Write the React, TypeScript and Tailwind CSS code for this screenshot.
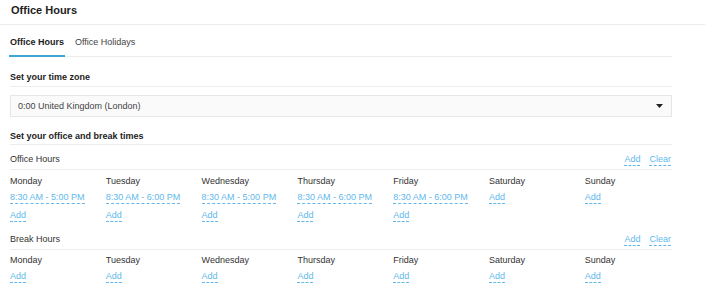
import React from 'react'

const days = ['Monday', 'Tuesday', 'Wednesday', 'Thursday', 'Friday', 'Saturday', 'Sunday']

// office hours per day: null = not set
const officeHours: (string | null)[] = [
  '8:30 AM - 5:00 PM',
  '8:30 AM - 6:00 PM',
  '8:30 AM - 5:00 PM',
  '8:30 AM - 6:00 PM',
  '8:30 AM - 6:00 PM',
  null,
  null,
]

function DashLink({ children, className = '' }: { children: React.ReactNode; className?: string }) {
  return (
    <a className={`self-start leading-[11px] text-[#62b8ec] border-b border-dashed border-[#62b8ec] cursor-pointer ${className}`}>
      {children}
    </a>
  )
}

function SectionRow({ label, className = '' }: { label: string; className?: string }) {
  return (
    <div className={`flex items-end justify-between border-b border-[#ededed] pb-[3px] ${className}`}>
      <span className="leading-[11px] text-[#333] mb-[1px]">{label}</span>
      <div className="flex gap-[9px] mr-[1px]">
        <DashLink>Add</DashLink>
        <DashLink>Clear</DashLink>
      </div>
    </div>
  )
}

export default function App() {
  return (
    <div className="w-[705px] h-[301px] bg-white text-[9px] text-[#333] overflow-hidden" style={{ fontFamily: '"Liberation Sans", Arial, sans-serif' }}>
      {/* Page header */}
      <div className="h-[25px] border-b border-[#ececec] pl-[11px] pt-[4px]">
        <h1 className="text-[11px] leading-[13px] font-bold text-[#222]">Office Hours</h1>
      </div>

      <div className="ml-[9px] w-[663px]">
        {/* Tabs */}
        <div className="flex border-b border-[#ececec]">
          <div className="pt-[12px] pb-[7px] px-[1px] border-b-2 border-[#3ba7d8] -mb-px font-bold text-[#222] leading-[11px]">
            Office Hours
          </div>
          <div className="pt-[12px] pb-[7px] ml-[10px] leading-[11px] text-[#444]">Office Holidays</div>
        </div>

        <div className="pl-[1px]">
          {/* Time zone */}
          <div className="mt-[15px] pb-[3px] border-b border-[#ededed] font-bold text-[#222] leading-[11px]">
            Set your time zone
          </div>
          <div className="mt-[8px] h-[22px] flex items-center justify-between bg-[#fafafa] border border-[#e6e6e6] pl-[7px] pr-[8px] text-[#444]">
            <span className="leading-[11px]">0:00 United Kingdom (London)</span>
            <svg width="7" height="4" viewBox="0 0 7 4">
              <path d="M0 0h7L3.5 4z" fill="#222" />
            </svg>
          </div>

          {/* Office & break times */}
          <div className="mt-[14px] pb-[2px] border-b border-[#ededed] font-bold text-[#222] leading-[11px]">
            Set your office and break times
          </div>

          <SectionRow label="Office Hours" className="mt-[9px]" />
          <div className="grid grid-cols-[repeat(7,95.8px)]">
            {days.map((d, i) => (
              <div key={d} className="flex flex-col">
                <span className="mt-[6px] leading-[11px] text-[#333]">{d}</span>
                {officeHours[i] ? (
                  <>
                    <DashLink className="mt-[5px]">{officeHours[i]}</DashLink>
                    <DashLink className="mt-[6px]">Add</DashLink>
                  </>
                ) : (
                  <DashLink className="mt-[5px]">Add</DashLink>
                )}
              </div>
            ))}
          </div>

          <SectionRow label="Break Hours" className="mt-[12px]" />
          <div className="grid grid-cols-[repeat(7,95.8px)]">
            {days.map((d) => (
              <div key={d} className="flex flex-col">
                <span className="mt-[5px] leading-[11px] text-[#333]">{d}</span>
                <DashLink className="mt-[5px]">Add</DashLink>
              </div>
            ))}
          </div>
        </div>
      </div>
    </div>
  )
}
